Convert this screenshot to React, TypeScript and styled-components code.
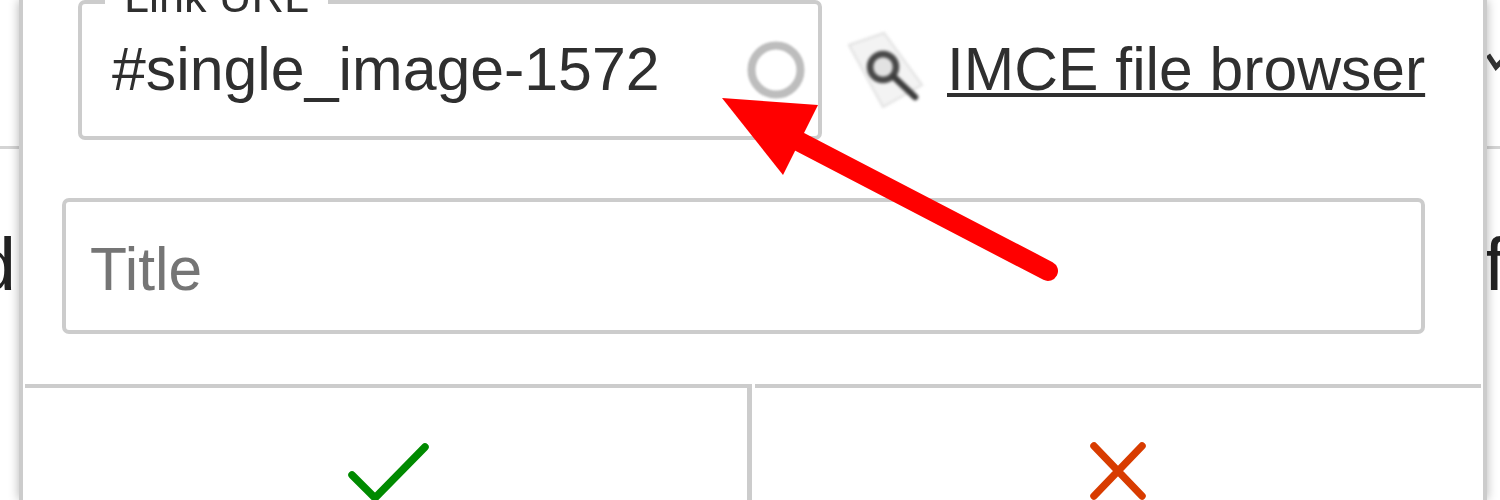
import React from "react"
import styled, { createGlobalStyle } from "styled-components"

const GlobalStyle = createGlobalStyle`
  html, body {
    margin: 0;
    background: #fff;
  }
  body {
    font-family: "Liberation Sans", Arial, sans-serif;
  }
`
const Page = styled.div`
  position: relative;
  display: flex;
  width: 1500px;
  height: 500px;
  overflow: hidden;
  background: #fff;
  color: #2f2f2f;
  filter: blur(0.7px);
`
const Gutter = styled.div<{ $side: "left" | "right" }>`
  flex: 0 0 ${p => (p.$side === "left" ? "19px" : "14px")};
  min-width: 0;
  overflow: hidden;
  display: flex;
  flex-flow: column;
  align-items: ${p => (p.$side === "left" ? "flex-end" : "flex-start")};
`
const Chevron = styled.svg`
  display: block;
  flex-shrink: 0;
  height: 146px;
  width: 14px;
`
const GutterRule = styled.div`
  flex-shrink: 0;
  width: 100%;
  height: 3px;
  background: #d4d4d4;
`
const GutterSpacer = styled.div`
  flex-shrink: 0;
  height: 146px;
`
const GutterText = styled.div<{ $side: "left" | "right" }>`
  flex-shrink: 0;
  margin-top: 80px;
  font-size: 75px;
  line-height: 70px;
  color: #222;
  white-space: nowrap;
  ${p => (p.$side === "left" ? "margin-right: 3px;" : "margin-left: -3px;")}
`
const Dialog = styled.div`
  z-index: 1;
  flex: 0 0 1467px;
  display: flex;
  flex-flow: column;
  box-sizing: border-box;
  border-left: solid 4px #ccc;
  border-right: solid 4px #ccc;
  background: #fff;
  box-shadow: 0 0 10px rgba(0, 0, 0, 0.3);
`
const Body = styled.div`
  height: 384px;
  flex-shrink: 0;
  padding: 0 58px 0 39px;
  box-sizing: border-box;
`
const UrlRow = styled.div`
  display: flex;
  align-items: flex-start;
  margin-left: 16px;
`
const UrlField = styled.fieldset`
  flex: 0 0 744px;
  box-sizing: border-box;
  height: 164px;
  margin: -24px 0 0;
  padding: 0 12px 0 30px;
  border: solid 4px #ccc;
  border-radius: 7px;
  min-width: 0;
`
const UrlLegend = styled.legend`
  margin-left: -7px;
  padding: 0 19px 10px;
  font-size: 45px;
  line-height: 42px;
`
const UrlInner = styled.div`
  display: flex;
  align-items: center;
  justify-content: space-between;
  height: 104px;
  margin-top: -11px;
  font-size: 60.8px;
  line-height: 70px;
`
const Spinner = styled.svg`
  width: 60px;
  height: 60px;
  margin-top: 2px;
  filter: blur(1px);
`
const BrowserLink = styled.a`
  display: flex;
  align-items: center;
  margin-left: 26px;
  height: 138px;
  color: #2f2f2f;
  font-size: 60.6px;
  white-space: nowrap;
`
const BrowserIcon = styled.svg`
  width: 76px;
  height: 82px;
  margin: 0 23px 4px 0;
  filter: blur(1.5px);
`
const BrowserLabel = styled.span`
  text-decoration: underline;
  text-decoration-thickness: 4px;
  text-underline-offset: 3px;
`
const TitleField = styled.div`
  box-sizing: border-box;
  height: 136px;
  margin-top: 58px;
  padding: 6px 24px 0;
  display: flex;
  align-items: center;
  border: solid 4px #ccc;
  border-radius: 7px;
  color: #757575;
  font-size: 60.5px;
`
const Actions = styled.div`
  flex: 1;
  display: grid;
  grid-template-columns: 1fr 1fr;
  gap: 3px;
  padding: 0 2px;
`
const ActionButton = styled.div<{ $divided?: boolean }>`
  display: flex;
  justify-content: center;
  align-items: flex-start;
  padding-top: 55px;
  border-top: solid 4px #ccc;
  ${p => (p.$divided ? "border-right: solid 5px #ccc; padding-left: 5px;" : "")}
`
const ActionIcon = styled.svg`
  flex-shrink: 0;
  overflow: visible;
`
const Arrow = styled.svg`
  position: absolute;
  z-index: 2;
  left: 0;
  top: 0;
  width: 1500px;
  height: 500px;
  pointer-events: none;
`

export default function App() {
  return (
    <>
      <GlobalStyle />
      <Page>
        <Gutter $side="left">
          <GutterSpacer />
          <GutterRule />
          <GutterText $side="left">d</GutterText>
        </Gutter>

        <Dialog>
          <Body>
            <UrlRow>
              <UrlField>
                <UrlLegend>Link URL</UrlLegend>
                <UrlInner>
                  #single_image-1572
                  <Spinner viewBox="0 0 60 60">
                    <circle cx="30" cy="30" r="24.5" fill="none" stroke="#bdbdbd" strokeWidth="8" />
                  </Spinner>
                </UrlInner>
              </UrlField>
              <BrowserLink>
                <BrowserIcon viewBox="0 0 76 82">
                  <polygon points="1,19 36,7 74,59 35,81" fill="#f3f3f3" stroke="#e0e0e0" strokeWidth="2" />
                  <circle cx="35" cy="41" r="13" fill="#e2e2e2" stroke="#484848" strokeWidth="6.5" />
                  <line x1="46" y1="51" x2="67" y2="71" stroke="#3c3c3c" strokeWidth="6.5" strokeLinecap="round" />
                </BrowserIcon>
                <BrowserLabel>IMCE file browser</BrowserLabel>
              </BrowserLink>
            </UrlRow>
            <TitleField>Title</TitleField>
          </Body>

          <Actions>
            <ActionButton $divided>
              <ActionIcon width="80" height="56" viewBox="0 0 80 56">
                <polyline points="4,32 27,55 77,4" fill="none" stroke="#008a00" strokeWidth="7.5" strokeLinecap="round" strokeLinejoin="round" />
              </ActionIcon>
            </ActionButton>
            <ActionButton>
              <ActionIcon width="54" height="56" viewBox="0 0 54 56">
                <path d="M3 3 L51 53 M51 3 L3 53" fill="none" stroke="#d83c00" strokeWidth="7.5" strokeLinecap="round" />
              </ActionIcon>
            </ActionButton>
          </Actions>
        </Dialog>

        <Gutter $side="right">
          <Chevron viewBox="0 0 14 146">
            <polyline points="1,55 9,67 15,61" fill="none" stroke="#333" strokeWidth="5" />
          </Chevron>
          <GutterRule />
          <GutterText $side="right">fo</GutterText>
        </Gutter>

        <Arrow viewBox="0 0 1500 500">
          <line x1="800" y1="142" x2="1048" y2="271" stroke="#ff0000" strokeWidth="20" strokeLinecap="round" />
          <polygon points="722,98 818,105 783,175" fill="#ff0000" />
        </Arrow>
      </Page>
    </>
  )
}
